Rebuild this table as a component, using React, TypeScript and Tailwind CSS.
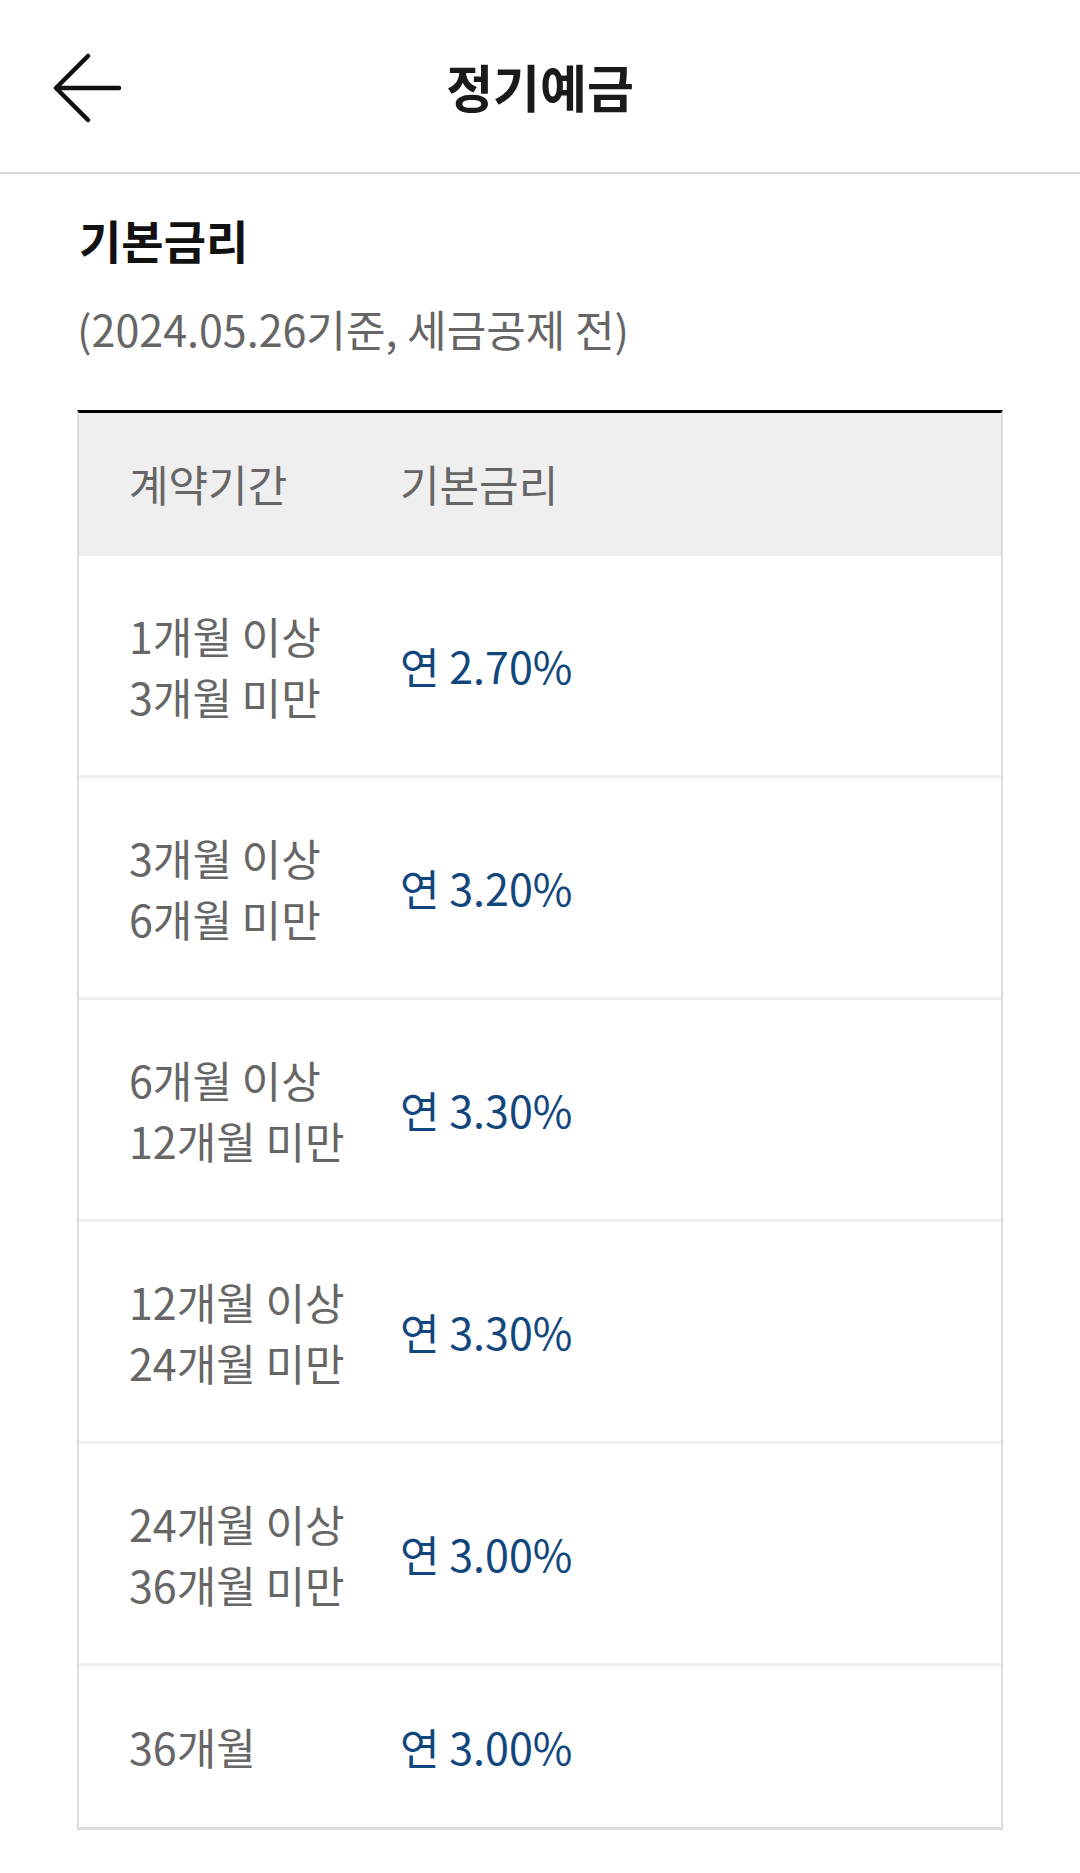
import { FC } from "react";

type Rate = {
  period: string[];
  rate: string;
};

const rates: Rate[] = [
  { period: ["1개월 이상", "3개월 미만"], rate: "연 2.70%" },
  { period: ["3개월 이상", "6개월 미만"], rate: "연 3.20%" },
  { period: ["6개월 이상", "12개월 미만"], rate: "연 3.30%" },
  { period: ["12개월 이상", "24개월 미만"], rate: "연 3.30%" },
  { period: ["24개월 이상", "36개월 미만"], rate: "연 3.00%" },
  { period: ["36개월"], rate: "연 3.00%" },
];

const font = { fontFamily: '"Noto Sans CJK KR", "Noto Sans", sans-serif' };

const BackArrow: FC = () => (
  <svg width="72" height="72" viewBox="0 0 72 72" fill="none" stroke="#111" strokeWidth="4.5" strokeLinecap="round" strokeLinejoin="round">
    <path d="M38 5 L6 37 L38 69" />
    <path d="M8 37 H69" />
  </svg>
);

const App: FC = () => {
  return (
    <div className="w-[1080px] min-h-[1873px] bg-white" style={font}>
      <div className="grid grid-cols-[1fr_auto_1fr] items-center h-[174px] border-b-2 border-[#d9d9d9]">
        <div className="pl-[50px] pt-[2px]">
          <BackArrow />
        </div>
        <h1 className="text-[51px] font-bold text-[#1a1a1a] leading-none">정기예금</h1>
        <div />
      </div>

      <div className="px-[77px] pt-[42px]">
        <h2 className="text-[46px] font-bold text-[#111] leading-none pl-[2px]">기본금리</h2>
        <p className="mt-[45px] text-[43px] text-[#666] leading-none">(2024.05.26기준, 세금공제 전)</p>

        <div className="mt-[60px] border-t-[3px] border-t-black border-x-2 border-b-[3px] border-x-[#dcdcdc] border-b-[#dcdcdc]">
          <div className="flex items-center h-[140px] bg-[#efefef] text-[43px] text-[#666] leading-none">
            <div className="w-[321px] pl-[50px]">계약기간</div>
            <div>기본금리</div>
          </div>
          {rates.map((r, i) => (
            <div
              key={i}
              className={
                i === rates.length - 1
                  ? "flex items-center h-[164px] border-t-[3px] border-[#eeeeee]"
                  : "flex items-center h-[222px] border-t-[3px] border-[#eeeeee] first:border-t-0"
              }
            >
              <div className="w-[321px] pl-[50px] text-[43px] leading-[61px] text-[#666]">
                {r.period.map((p) => (
                  <div key={p}>{p}</div>
                ))}
              </div>
              <div className="text-[43px] text-[#12477d] leading-none">{r.rate}</div>
            </div>
          ))}
        </div>
      </div>
    </div>
  );
};

export default App;
